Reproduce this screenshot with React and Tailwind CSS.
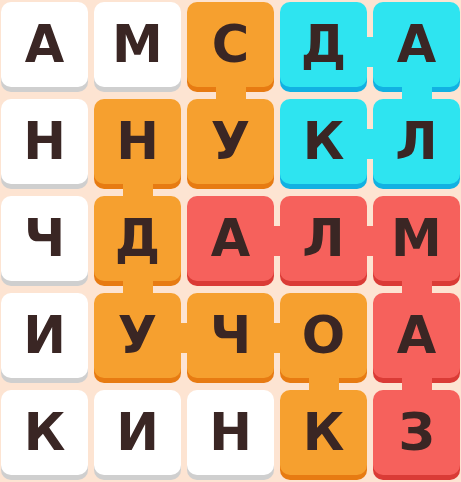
const COLORS = {
  w: { face: 'bg-white', shade: 'shadow-[0_5px_0_#cfcfcf]', link: 'bg-white' },
  o: { face: 'bg-[#f6a02f]', shade: 'shadow-[0_5px_0_#e77b12]', link: 'bg-[#f6a02f]' },
  c: { face: 'bg-[#2ee4f0]', shade: 'shadow-[0_5px_0_#12b1e2]', link: 'bg-[#2ee4f0]' },
  r: { face: 'bg-[#f6615c]', shade: 'shadow-[0_5px_0_#da3b36]', link: 'bg-[#f6615c]' },
};

// letter, colour, link to the right, link below
const GRID = [
  [['А', 'w'], ['М', 'w'], ['С', 'o', 0, 1], ['Д', 'c', 1], ['А', 'c', 0, 1]],
  [['Н', 'w'], ['Н', 'o', 0, 1], ['У', 'o'], ['К', 'c', 1], ['Л', 'c']],
  [['Ч', 'w'], ['Д', 'o', 0, 1], ['А', 'r', 1], ['Л', 'r', 1], ['М', 'r', 0, 1]],
  [['И', 'w'], ['У', 'o', 1], ['Ч', 'o', 1], ['О', 'o', 0, 1], ['А', 'r', 0, 1]],
  [['К', 'w'], ['И', 'w'], ['Н', 'w'], ['К', 'o'], ['З', 'r']],
];

function Tile({ letter, color, right, down, first }) {
  const c = COLORS[color];
  return (
    <div className="relative h-[90px]">
      <div
        className={`relative z-10 flex h-[85px] items-center justify-center rounded-[10px] ${c.face} ${c.shade}`}
      >
        <span className="text-[51px] font-bold leading-none text-[#3a2624]">{letter}</span>
      </div>
      {right ? (
        <div
          className={`absolute left-[80px] z-20 h-[30px] w-[20px] ${first ? 'top-[35px]' : 'top-[30px]'} ${c.link}`}
        />
      ) : null}
      {down ? <div className={`absolute left-[28.5px] top-[80px] z-20 h-[22px] w-[30px] ${c.link}`} /> : null}
    </div>
  );
}

export default function App() {
  return (
    <div className="h-[482px] w-[461px] overflow-hidden bg-[#fde4d2] pl-[1px] pt-[2px] font-['DejaVu_Sans',sans-serif]">
      <div className="grid grid-cols-[repeat(5,87px)] gap-x-[6px] gap-y-[7px]">
        {GRID.flat().map(([letter, color, right, down], i) => (
          <Tile key={i} letter={letter} color={color} right={right} down={down} first={i < 5} />
        ))}
      </div>
    </div>
  );
}
